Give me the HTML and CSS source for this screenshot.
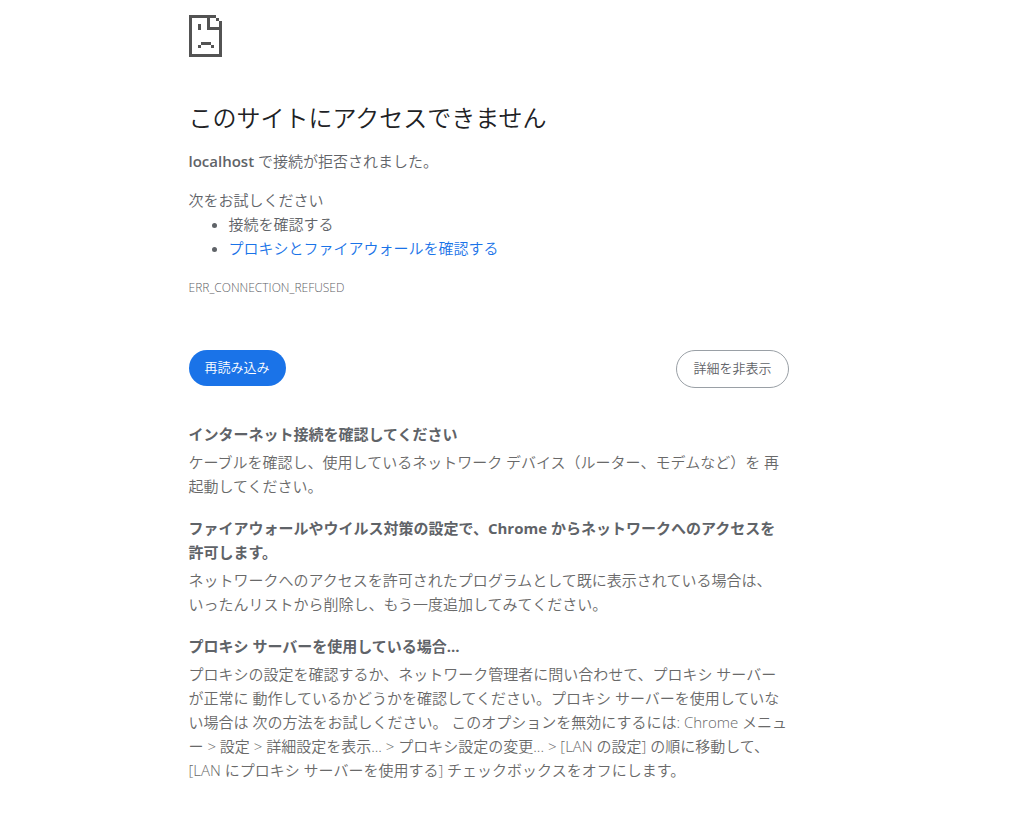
FILE: index.html
```html
<!DOCTYPE html>
<html lang="ja">
<head>
<meta charset="utf-8">
<meta name="viewport" content="width=device-width, initial-scale=1">
<title>localhost</title>
<link rel="stylesheet" href="styles.css">
</head>
<body>
<main class="page">
  <svg class="page-icon" viewBox="0 0 33 42" width="33" height="42" shape-rendering="crispEdges" aria-hidden="true">
    <path d="M0 0H27V3H3V39H30V15H18V3H21V12H30V6H33V42H0ZM27 3H30V6H27ZM9 9H12V15H9ZM12 27H22V30H12ZM9 30H12V33H9ZM22 30H25V33H22Z"/>
  </svg>
  <h1 class="title">このサイトにアクセスできません</h1>
  <p class="summary"><strong class="host">localhost</strong> で接続が拒否されました。</p>
  <div class="suggestions">
    <p class="suggestions-label">次をお試しください</p>
    <ul class="suggestions-list">
      <li>接続を確認する</li>
      <li><a class="link" href="#firewall">プロキシとファイアウォールを確認する</a></li>
    </ul>
  </div>
  <p class="error-code">ERR_CONNECTION_REFUSED</p>
  <div class="actions">
    <button class="button button-primary" type="button">再読み込み</button>
    <button class="button button-secondary" type="button">詳細を非表示</button>
  </div>
  <div class="details">
    <section class="detail">
      <h2 class="detail-title">インターネット接続を確認してください</h2>
      <p class="detail-text">ケーブルを確認し、使用しているネットワーク デバイス（ルーター、モデムなど）を 再起動してください。</p>
    </section>
    <section class="detail" id="firewall">
      <h2 class="detail-title">ファイアウォールやウイルス対策の設定で、Chrome からネットワークへのアクセスを許可します。</h2>
      <p class="detail-text">ネットワークへのアクセスを許可されたプログラムとして既に表示されている場合は、<span class="phrase">いったん</span>リストから削除し、もう一度追加してみてください。</p>
    </section>
    <section class="detail">
      <h2 class="detail-title">プロキシ サーバーを使用している場合...</h2>
      <p class="detail-text">プロキシの設定を確認するか、ネットワーク管理者に問い合わせて、プロキシ サーバーが正常に 動作しているかどうかを確認してください。プロキシ サーバーを使用していない場合は 次の方法をお試しください。 このオプションを無効にするには: Chrome メニュー &gt; 設定 &gt; 詳細設定を表示... &gt; プロキシ設定の変更... &gt; [LAN の設定] の順に移動して、[LAN にプロキシ サーバーを使用する] チェックボックスをオフにします。</p>
    </section>
  </div>
</main>
</body>
</html>
```

FILE: styles.css
```css
* {
  box-sizing: border-box;
}

body {
  margin: 0;
  padding-right: 32px;
  background: #fff;
  color: #5f6368;
  font-family: "Open Sans", "Noto Sans CJK JP", sans-serif;
  font-size: 15px;
  font-weight: 350;
  line-height: 24px;
}

h1,
h2,
p,
ul {
  margin: 0;
}

.page {
  max-width: 600px;
  margin: 0 auto;
  padding: 15px 0 36px;
}

.page-icon {
  display: block;
  margin-bottom: 46px;
  fill: #535353;
}

.title {
  margin-bottom: 16px;
  color: #202124;
  font-size: 24px;
  font-weight: 350;
  line-height: 30px;
}

.summary {
  margin-bottom: 15px;
}

.host {
  font-weight: 600;
}

.suggestions {
  margin-bottom: 16px;
}

.suggestions-list {
  padding-left: 40px;
}

.link {
  color: #1a73e8;
  text-decoration: none;
}

.error-code {
  font-size: 12px;
}

.actions {
  display: flex;
  justify-content: space-between;
  align-items: flex-start;
  margin-top: 50px;
}

.button {
  padding: 7px 16px 9px;
  border: 0;
  border-radius: 20px;
  font: inherit;
  font-size: 13px;
  line-height: 20px;
  cursor: pointer;
}

.button-primary {
  background: #1a73e8;
  color: #fff;
}

.button-secondary {
  border: 1px solid #9aa0a6;
  background: #fff;
  color: #5f6368;
}

.details {
  display: flex;
  flex-direction: column;
  gap: 18px;
  margin-top: 34px;
  color: #696969;
}

.detail-title {
  margin-bottom: 4px;
  color: #5f6368;
  font-size: 15px;
  font-weight: 700;
}

.phrase {
  white-space: nowrap;
}
```
